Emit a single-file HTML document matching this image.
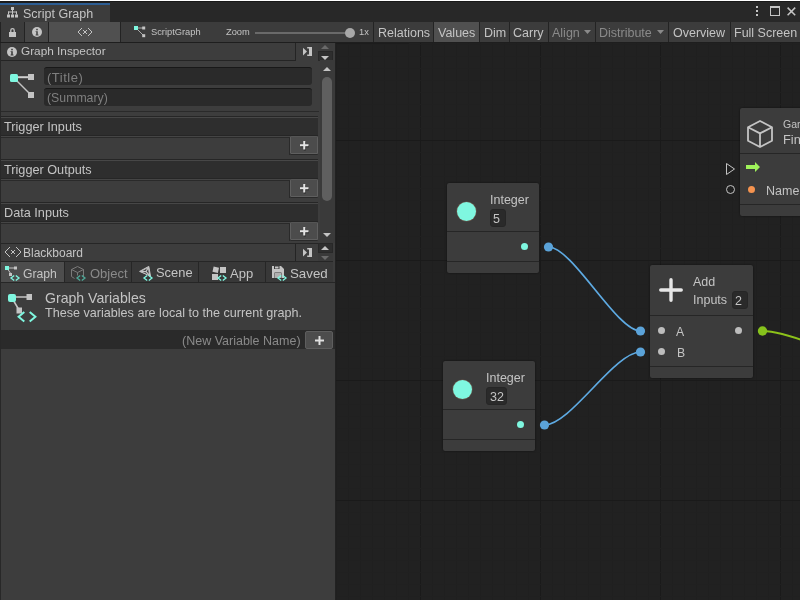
<!DOCTYPE html>
<html><head><meta charset="utf-8">
<style>
*{margin:0;padding:0;box-sizing:border-box}
html,body{width:800px;height:600px;overflow:hidden;background:#202020;font-family:"Liberation Sans",sans-serif;color:#c4c4c4;-webkit-font-smoothing:antialiased}
.a{position:absolute}
.t{position:absolute;white-space:nowrap;line-height:1;will-change:transform}
svg{position:absolute;overflow:visible}
</style></head><body>
<div class="a" style="left:336px;top:43px;width:464px;height:557px;background:#212121;"></div>
<svg style="left:336px;top:43px" width="464" height="557"><line x1="0.5" y1="0" x2="0.5" y2="557" stroke="#1f1f1f" stroke-width="1"/><line x1="12.5" y1="0" x2="12.5" y2="557" stroke="#1f1f1f" stroke-width="1"/><line x1="24.5" y1="0" x2="24.5" y2="557" stroke="#1f1f1f" stroke-width="1"/><line x1="36.5" y1="0" x2="36.5" y2="557" stroke="#1f1f1f" stroke-width="1"/><line x1="48.5" y1="0" x2="48.5" y2="557" stroke="#1f1f1f" stroke-width="1"/><line x1="60.5" y1="0" x2="60.5" y2="557" stroke="#1f1f1f" stroke-width="1"/><line x1="72.5" y1="0" x2="72.5" y2="557" stroke="#1f1f1f" stroke-width="1"/><line x1="84.5" y1="0" x2="84.5" y2="557" stroke="#1a1a1a" stroke-width="1"/><line x1="96.5" y1="0" x2="96.5" y2="557" stroke="#1f1f1f" stroke-width="1"/><line x1="108.5" y1="0" x2="108.5" y2="557" stroke="#1f1f1f" stroke-width="1"/><line x1="120.5" y1="0" x2="120.5" y2="557" stroke="#1f1f1f" stroke-width="1"/><line x1="132.5" y1="0" x2="132.5" y2="557" stroke="#1f1f1f" stroke-width="1"/><line x1="144.5" y1="0" x2="144.5" y2="557" stroke="#1f1f1f" stroke-width="1"/><line x1="156.5" y1="0" x2="156.5" y2="557" stroke="#1f1f1f" stroke-width="1"/><line x1="168.5" y1="0" x2="168.5" y2="557" stroke="#1f1f1f" stroke-width="1"/><line x1="180.5" y1="0" x2="180.5" y2="557" stroke="#1f1f1f" stroke-width="1"/><line x1="192.5" y1="0" x2="192.5" y2="557" stroke="#1f1f1f" stroke-width="1"/><line x1="204.5" y1="0" x2="204.5" y2="557" stroke="#1a1a1a" stroke-width="1"/><line x1="216.5" y1="0" x2="216.5" y2="557" stroke="#1f1f1f" stroke-width="1"/><line x1="228.5" y1="0" x2="228.5" y2="557" stroke="#1f1f1f" stroke-width="1"/><line x1="240.5" y1="0" x2="240.5" y2="557" stroke="#1f1f1f" stroke-width="1"/><line x1="252.5" y1="0" x2="252.5" y2="557" stroke="#1f1f1f" stroke-width="1"/><line x1="264.5" y1="0" x2="264.5" y2="557" stroke="#1f1f1f" stroke-width="1"/><line x1="276.5" y1="0" x2="276.5" y2="557" stroke="#1f1f1f" stroke-width="1"/><line x1="288.5" y1="0" x2="288.5" y2="557" stroke="#1f1f1f" stroke-width="1"/><line x1="300.5" y1="0" x2="300.5" y2="557" stroke="#1f1f1f" stroke-width="1"/><line x1="312.5" y1="0" x2="312.5" y2="557" stroke="#1f1f1f" stroke-width="1"/><line x1="324.5" y1="0" x2="324.5" y2="557" stroke="#1a1a1a" stroke-width="1"/><line x1="336.5" y1="0" x2="336.5" y2="557" stroke="#1f1f1f" stroke-width="1"/><line x1="348.5" y1="0" x2="348.5" y2="557" stroke="#1f1f1f" stroke-width="1"/><line x1="360.5" y1="0" x2="360.5" y2="557" stroke="#1f1f1f" stroke-width="1"/><line x1="372.5" y1="0" x2="372.5" y2="557" stroke="#1f1f1f" stroke-width="1"/><line x1="384.5" y1="0" x2="384.5" y2="557" stroke="#1f1f1f" stroke-width="1"/><line x1="396.5" y1="0" x2="396.5" y2="557" stroke="#1f1f1f" stroke-width="1"/><line x1="408.5" y1="0" x2="408.5" y2="557" stroke="#1f1f1f" stroke-width="1"/><line x1="420.5" y1="0" x2="420.5" y2="557" stroke="#1f1f1f" stroke-width="1"/><line x1="432.5" y1="0" x2="432.5" y2="557" stroke="#1f1f1f" stroke-width="1"/><line x1="444.5" y1="0" x2="444.5" y2="557" stroke="#1a1a1a" stroke-width="1"/><line x1="456.5" y1="0" x2="456.5" y2="557" stroke="#1f1f1f" stroke-width="1"/><line x1="0" y1="1.5" x2="464" y2="1.5" stroke="#202020" stroke-width="1"/><line x1="0" y1="13.5" x2="464" y2="13.5" stroke="#202020" stroke-width="1"/><line x1="0" y1="25.5" x2="464" y2="25.5" stroke="#202020" stroke-width="1"/><line x1="0" y1="37.5" x2="464" y2="37.5" stroke="#202020" stroke-width="1"/><line x1="0" y1="49.5" x2="464" y2="49.5" stroke="#202020" stroke-width="1"/><line x1="0" y1="61.5" x2="464" y2="61.5" stroke="#202020" stroke-width="1"/><line x1="0" y1="73.5" x2="464" y2="73.5" stroke="#202020" stroke-width="1"/><line x1="0" y1="85.5" x2="464" y2="85.5" stroke="#202020" stroke-width="1"/><line x1="0" y1="97.5" x2="464" y2="97.5" stroke="#1a1a1a" stroke-width="1"/><line x1="0" y1="109.5" x2="464" y2="109.5" stroke="#202020" stroke-width="1"/><line x1="0" y1="121.5" x2="464" y2="121.5" stroke="#202020" stroke-width="1"/><line x1="0" y1="133.5" x2="464" y2="133.5" stroke="#202020" stroke-width="1"/><line x1="0" y1="145.5" x2="464" y2="145.5" stroke="#202020" stroke-width="1"/><line x1="0" y1="157.5" x2="464" y2="157.5" stroke="#202020" stroke-width="1"/><line x1="0" y1="169.5" x2="464" y2="169.5" stroke="#202020" stroke-width="1"/><line x1="0" y1="181.5" x2="464" y2="181.5" stroke="#202020" stroke-width="1"/><line x1="0" y1="193.5" x2="464" y2="193.5" stroke="#202020" stroke-width="1"/><line x1="0" y1="205.5" x2="464" y2="205.5" stroke="#202020" stroke-width="1"/><line x1="0" y1="217.5" x2="464" y2="217.5" stroke="#1a1a1a" stroke-width="1"/><line x1="0" y1="229.5" x2="464" y2="229.5" stroke="#202020" stroke-width="1"/><line x1="0" y1="241.5" x2="464" y2="241.5" stroke="#202020" stroke-width="1"/><line x1="0" y1="253.5" x2="464" y2="253.5" stroke="#202020" stroke-width="1"/><line x1="0" y1="265.5" x2="464" y2="265.5" stroke="#202020" stroke-width="1"/><line x1="0" y1="277.5" x2="464" y2="277.5" stroke="#202020" stroke-width="1"/><line x1="0" y1="289.5" x2="464" y2="289.5" stroke="#202020" stroke-width="1"/><line x1="0" y1="301.5" x2="464" y2="301.5" stroke="#202020" stroke-width="1"/><line x1="0" y1="313.5" x2="464" y2="313.5" stroke="#202020" stroke-width="1"/><line x1="0" y1="325.5" x2="464" y2="325.5" stroke="#202020" stroke-width="1"/><line x1="0" y1="337.5" x2="464" y2="337.5" stroke="#1a1a1a" stroke-width="1"/><line x1="0" y1="349.5" x2="464" y2="349.5" stroke="#202020" stroke-width="1"/><line x1="0" y1="361.5" x2="464" y2="361.5" stroke="#202020" stroke-width="1"/><line x1="0" y1="373.5" x2="464" y2="373.5" stroke="#202020" stroke-width="1"/><line x1="0" y1="385.5" x2="464" y2="385.5" stroke="#202020" stroke-width="1"/><line x1="0" y1="397.5" x2="464" y2="397.5" stroke="#202020" stroke-width="1"/><line x1="0" y1="409.5" x2="464" y2="409.5" stroke="#202020" stroke-width="1"/><line x1="0" y1="421.5" x2="464" y2="421.5" stroke="#202020" stroke-width="1"/><line x1="0" y1="433.5" x2="464" y2="433.5" stroke="#202020" stroke-width="1"/><line x1="0" y1="445.5" x2="464" y2="445.5" stroke="#202020" stroke-width="1"/><line x1="0" y1="457.5" x2="464" y2="457.5" stroke="#1a1a1a" stroke-width="1"/><line x1="0" y1="469.5" x2="464" y2="469.5" stroke="#202020" stroke-width="1"/><line x1="0" y1="481.5" x2="464" y2="481.5" stroke="#202020" stroke-width="1"/><line x1="0" y1="493.5" x2="464" y2="493.5" stroke="#202020" stroke-width="1"/><line x1="0" y1="505.5" x2="464" y2="505.5" stroke="#202020" stroke-width="1"/><line x1="0" y1="517.5" x2="464" y2="517.5" stroke="#202020" stroke-width="1"/><line x1="0" y1="529.5" x2="464" y2="529.5" stroke="#202020" stroke-width="1"/><line x1="0" y1="541.5" x2="464" y2="541.5" stroke="#202020" stroke-width="1"/><line x1="0" y1="553.5" x2="464" y2="553.5" stroke="#202020" stroke-width="1"/></svg>
<div class="a" style="left:0px;top:0px;width:800px;height:22px;background:#282828;"></div>
<div class="a" style="left:0px;top:0px;width:800px;height:1px;background:#ffffff;"></div>
<div class="a" style="left:0px;top:1px;width:800px;height:1px;background:#191919;"></div>
<div class="a" style="left:0px;top:2px;width:110px;height:1px;background:#1e1e1e;"></div>
<div class="a" style="left:0px;top:3px;width:110px;height:19px;background:#3c3c3c;"></div>
<div class="a" style="left:0px;top:3px;width:110px;height:2px;background:#2c5d93;"></div>
<svg style="left:7px;top:7px" width="11" height="11" viewBox="0 0 11 11"><g fill="#c4c4c4"><rect x="4" y="0" width="3" height="3"/><rect x="5" y="3" width="1" height="2"/><rect x="1" y="4.5" width="9" height="1"/><rect x="1" y="4.5" width="1" height="3"/><rect x="9" y="4.5" width="1" height="3"/><rect x="5" y="4.5" width="1" height="3"/><rect x="0" y="7.5" width="3" height="3"/><rect x="4" y="7.5" width="3" height="3"/><rect x="8" y="7.5" width="3" height="3"/></g></svg>
<div class="t" style="left:22.5px;top:7.61px;font-size:12.5px;color:#c4c4c4;">Script Graph</div>
<div class="a" style="left:756px;top:6px;width:2px;height:2px;background:#c4c4c4;"></div>
<div class="a" style="left:756px;top:10px;width:2px;height:2px;background:#c4c4c4;"></div>
<div class="a" style="left:756px;top:14px;width:2px;height:2px;background:#c4c4c4;"></div>
<div class="a" style="left:770px;top:6px;width:10px;height:10px;border:1px solid #c4c4c4;border-top-width:2.5px"></div>
<svg style="left:786.7px;top:6.6px" width="9" height="9" viewBox="0 0 9 9"><path d="M0.6 0.6L8.2 8.2M8.2 0.6L0.6 8.2" stroke="#c4c4c4" stroke-width="1.5"/></svg>
<div class="a" style="left:0px;top:22px;width:800px;height:20px;background:#3c3c3c;"></div>
<div class="a" style="left:0px;top:42px;width:800px;height:1px;background:#1e1e1e;"></div>
<div class="a" style="left:336px;top:43px;width:73px;height:1px;background:#1c1c1c;"></div>
<div class="a" style="left:0px;top:22px;width:1px;height:20px;background:#232323;"></div>
<div class="a" style="left:24px;top:22px;width:1px;height:20px;background:#232323;"></div>
<div class="a" style="left:25px;top:22px;width:23px;height:20px;background:#464646;"></div>
<div class="a" style="left:48px;top:22px;width:1px;height:20px;background:#232323;"></div>
<div class="a" style="left:49px;top:22px;width:71px;height:20px;background:#505050;"></div>
<div class="a" style="left:120px;top:22px;width:1px;height:20px;background:#232323;"></div>
<svg style="left:9px;top:28px" width="8" height="9" viewBox="0 0 8 9"><path d="M1.8 4.2V2.3a1.7 1.7 0 0 1 3.4 0V4.2" fill="none" stroke="#c4c4c4" stroke-width="1.3"/><rect x="0" y="4" width="7" height="5" fill="#c4c4c4"/></svg>
<svg style="left:32px;top:27px" width="10" height="10" viewBox="0 0 10 10"><circle cx="5" cy="5" r="5" fill="#c4c4c4"/><rect x="4.2" y="1.8" width="1.6" height="1.5" fill="#464646"/><path d="M3.6 4.2H5.8V7.6H6.5V8.4H3.6V7.6H4.2V5H3.6Z" fill="#464646"/></svg>
<svg style="left:78px;top:28px" width="20" height="12" shape-rendering="crispEdges"><g fill="#c4c4c4"><rect x="3" y="0" width="1" height="1"/><rect x="2" y="1" width="1" height="1"/><rect x="1" y="2" width="1" height="1"/><rect x="0" y="3" width="1" height="1"/><rect x="0" y="4" width="1" height="1"/><rect x="1" y="5" width="1" height="1"/><rect x="2" y="6" width="1" height="1"/><rect x="3" y="7" width="1" height="1"/><rect x="10" y="0" width="1" height="1"/><rect x="11" y="1" width="1" height="1"/><rect x="12" y="2" width="1" height="1"/><rect x="13" y="3" width="1" height="1"/><rect x="13" y="4" width="1" height="1"/><rect x="12" y="5" width="1" height="1"/><rect x="11" y="6" width="1" height="1"/><rect x="10" y="7" width="1" height="1"/><rect x="5" y="2" width="1" height="1"/><rect x="8" y="2" width="1" height="1"/><rect x="5" y="5" width="1" height="1"/><rect x="8" y="5" width="1" height="1"/><rect x="6" y="3" width="1" height="1"/><rect x="7" y="3" width="1" height="1"/><rect x="6" y="4" width="1" height="1"/><rect x="7" y="4" width="1" height="1"/></g></svg>
<svg style="left:134px;top:26px" width="12" height="12" viewBox="0 0 12 12"><path d="M3 2H9M3 3L9.5 9.5" stroke="#b8b8b8" stroke-width="0.9"/><rect x="0" y="0" width="4" height="4" fill="#7ff7e0"/><rect x="8.2" y="0.5" width="3" height="3" fill="#c4c4c4"/><rect x="8.2" y="8.2" width="3" height="3" fill="#c4c4c4"/></svg>
<div class="t" style="left:151px;top:27.62px;font-size:9.3px;color:#c4c4c4;">ScriptGraph</div>
<div class="t" style="left:226px;top:27.62px;font-size:9.3px;color:#c4c4c4;">Zoom</div>
<div class="a" style="left:255px;top:32px;width:95px;height:2px;background:#6a6a6a;"></div>
<div class="a" style="left:345px;top:28px;width:10px;height:10px;border-radius:50%;background:#a8a8a8"></div>
<div class="t" style="left:359px;top:27.62px;font-size:9.3px;color:#c4c4c4;">1x</div>
<div class="a" style="left:373px;top:22px;width:1px;height:20px;background:#232323;"></div>
<div class="a" style="left:374px;top:22px;width:59px;height:20px;background:#3c3c3c;"></div>
<div class="t" style="left:377.6px;top:26.71px;font-size:12.5px;color:#c4c4c4;">Relations</div>
<div class="a" style="left:433px;top:22px;width:1px;height:20px;background:#232323;"></div>
<div class="a" style="left:434px;top:22px;width:45px;height:20px;background:#505050;"></div>
<div class="t" style="left:437.6px;top:26.71px;font-size:12.5px;color:#c4c4c4;">Values</div>
<div class="a" style="left:479px;top:22px;width:1px;height:20px;background:#232323;"></div>
<div class="a" style="left:480px;top:22px;width:29px;height:20px;background:#3c3c3c;"></div>
<div class="t" style="left:484px;top:26.71px;font-size:12.5px;color:#c4c4c4;">Dim</div>
<div class="a" style="left:509px;top:22px;width:1px;height:20px;background:#232323;"></div>
<div class="a" style="left:510px;top:22px;width:38px;height:20px;background:#3c3c3c;"></div>
<div class="t" style="left:513px;top:26.71px;font-size:12.5px;color:#c4c4c4;">Carry</div>
<div class="a" style="left:548px;top:22px;width:1px;height:20px;background:#232323;"></div>
<div class="a" style="left:549px;top:22px;width:46px;height:20px;background:#3c3c3c;"></div>
<div class="t" style="left:551.8px;top:26.71px;font-size:12.5px;color:#8a8a8a;">Align</div>
<div class="a" style="left:595px;top:22px;width:1px;height:20px;background:#232323;"></div>
<div class="a" style="left:596px;top:22px;width:72px;height:20px;background:#3c3c3c;"></div>
<div class="t" style="left:599px;top:26.71px;font-size:12.5px;color:#8a8a8a;">Distribute</div>
<div class="a" style="left:668px;top:22px;width:1px;height:20px;background:#232323;"></div>
<div class="a" style="left:669px;top:22px;width:61px;height:20px;background:#3c3c3c;"></div>
<div class="t" style="left:673px;top:26.71px;font-size:12.5px;color:#c4c4c4;">Overview</div>
<div class="a" style="left:730px;top:22px;width:1px;height:20px;background:#232323;"></div>
<div class="a" style="left:731px;top:22px;width:69px;height:20px;background:#3c3c3c;"></div>
<div class="t" style="left:734px;top:26.71px;font-size:12.5px;color:#c4c4c4;">Full Screen</div>
<svg style="left:583.7px;top:30px" width="7" height="4"><path d="M0 0H7L3.5 4Z" fill="#8a8a8a"/></svg>
<svg style="left:656.8px;top:30px" width="7" height="4"><path d="M0 0H7L3.5 4Z" fill="#8a8a8a"/></svg>
<div class="a" style="left:0px;top:43px;width:335px;height:557px;background:#3d3d3d;"></div>
<div class="a" style="left:0px;top:43px;width:1px;height:557px;background:#282828;"></div>
<div class="a" style="left:335px;top:43px;width:1px;height:557px;background:#222222;"></div>
<div class="a" style="left:1px;top:43px;width:294px;height:17px;background:#3d3d3d;"></div>
<div class="a" style="left:295px;top:43px;width:1px;height:18px;background:#242424;"></div>
<div class="a" style="left:1px;top:60px;width:295px;height:1px;background:#242424;"></div>
<svg style="left:7px;top:46.5px" width="10" height="10" viewBox="0 0 10 10"><circle cx="5" cy="5" r="5" fill="#c4c4c4"/><rect x="4.2" y="1.8" width="1.6" height="1.5" fill="#3d3d3d"/><path d="M3.6 4.2H5.8V7.6H6.5V8.4H3.6V7.6H4.2V5H3.6Z" fill="#3d3d3d"/></svg>
<div class="t" style="left:21.3px;top:46.11px;font-size:11.8px;color:#c4c4c4;">Graph Inspector</div>
<svg style="left:303px;top:47px" width="10" height="9" viewBox="0 0 10 9"><path d="M0 0.7L4 4.6L0 8.5Z" fill="#c4c4c4"/><path d="M4.2 0H9V9H4.2V7.5H6V1.5H4.2Z" fill="#c4c4c4"/></svg>
<div class="a" style="left:318px;top:43px;width:15px;height:8px;background:#3c3c3c;"></div>
<div class="a" style="left:318px;top:51px;width:15px;height:10px;background:#2e2e2e;border:1px solid #282828"></div>
<svg style="left:321px;top:45px" width="8" height="4"><path d="M0 4H8L4 0Z" fill="#6a6a6a"/></svg>
<svg style="left:321px;top:56px" width="8" height="4"><path d="M0 0H8L4 4Z" fill="#c4c4c4"/></svg>
<svg style="left:10px;top:74px" width="24" height="24" viewBox="0 0 24 24"><path d="M4 3.2H21" stroke="#cfcfcf" stroke-width="2"/><path d="M4 4L21 21" stroke="#c4c4c4" stroke-width="1.5"/><rect x="0" y="0" width="8" height="8" rx="1.5" fill="#7ff7e0"/><rect x="18" y="0" width="6" height="6" fill="#c4c4c4"/><rect x="18" y="18" width="6" height="6" fill="#c4c4c4"/></svg>
<div class="a" style="left:44px;top:67px;width:268px;height:18px;background:#2a2a2a;border-radius:3px;border-top:1px solid #181818"></div>
<div class="a" style="left:44px;top:88px;width:268px;height:18px;background:#2a2a2a;border-radius:3px;border-top:1px solid #181818"></div>
<div class="t" style="left:46.8px;top:70.69px;font-size:13px;color:#7f7f7f;letter-spacing:0.5px">(Title)</div>
<div class="t" style="left:46.8px;top:91.98px;font-size:12.3px;color:#7f7f7f;">(Summary)</div>
<div class="a" style="left:320px;top:60px;width:15px;height:183px;background:#3a3a3a;"></div>
<svg style="left:323px;top:67px" width="8" height="4"><path d="M0 4H8L4 0Z" fill="#c4c4c4"/></svg>
<div class="a" style="left:322px;top:77px;width:10px;height:124px;background:#5f5f5f;border-radius:5px"></div>
<svg style="left:323px;top:233.3px" width="8" height="4"><path d="M0 0H8L4 4Z" fill="#c4c4c4"/></svg>
<div class="a" style="left:1px;top:111px;width:318px;height:1px;background:#2a2a2a;"></div>
<div class="a" style="left:1px;top:116px;width:317px;height:1px;background:#262626;"></div>
<div class="a" style="left:1px;top:117px;width:317px;height:1px;background:#474747;"></div>
<div class="a" style="left:1px;top:118px;width:317px;height:17px;background:#2e2e2e;"></div>
<div class="a" style="left:1px;top:135px;width:317px;height:1px;background:#262626;"></div>
<div class="a" style="left:1px;top:136px;width:289px;height:1px;background:#454545;"></div>
<div class="a" style="left:1px;top:137px;width:289px;height:1px;background:#2a2a2a;"></div>
<div class="a" style="left:289px;top:137px;width:1px;height:18px;background:#2a2a2a;"></div>
<div class="a" style="left:1px;top:138px;width:288px;height:21px;background:#3d3d3d;"></div>
<div class="t" style="left:3.8px;top:121.14px;font-size:12.7px;color:#c4c4c4;">Trigger Inputs</div>
<div class="a" style="left:290px;top:136px;width:28px;height:18px;background:#4c4c4c;border:1px solid #5f5f5f;border-top-color:#555;border-radius:1.5px;box-shadow:0 1px 0 #2a2a2a"></div>
<svg style="left:299.75px;top:140.75px" width="9" height="9"><path d="M0 4.25H8.5M4.25 0V8.5" stroke="#000" stroke-opacity="0.5" stroke-width="2" transform="translate(0.5,1)"/><path d="M0 4.25H8.5M4.25 0V8.5" stroke="#e4e4e4" stroke-width="2"/></svg>
<div class="a" style="left:1px;top:159px;width:317px;height:1px;background:#262626;"></div>
<div class="a" style="left:1px;top:160px;width:317px;height:1px;background:#474747;"></div>
<div class="a" style="left:1px;top:161px;width:317px;height:17px;background:#2e2e2e;"></div>
<div class="a" style="left:1px;top:178px;width:317px;height:1px;background:#262626;"></div>
<div class="a" style="left:1px;top:179px;width:289px;height:1px;background:#454545;"></div>
<div class="a" style="left:1px;top:180px;width:289px;height:1px;background:#2a2a2a;"></div>
<div class="a" style="left:289px;top:180px;width:1px;height:18px;background:#2a2a2a;"></div>
<div class="a" style="left:1px;top:181px;width:288px;height:21px;background:#3d3d3d;"></div>
<div class="t" style="left:3.8px;top:164.14px;font-size:12.7px;color:#c4c4c4;">Trigger Outputs</div>
<div class="a" style="left:290px;top:179px;width:28px;height:18px;background:#4c4c4c;border:1px solid #5f5f5f;border-top-color:#555;border-radius:1.5px;box-shadow:0 1px 0 #2a2a2a"></div>
<svg style="left:299.75px;top:183.75px" width="9" height="9"><path d="M0 4.25H8.5M4.25 0V8.5" stroke="#000" stroke-opacity="0.5" stroke-width="2" transform="translate(0.5,1)"/><path d="M0 4.25H8.5M4.25 0V8.5" stroke="#e4e4e4" stroke-width="2"/></svg>
<div class="a" style="left:1px;top:202px;width:317px;height:1px;background:#262626;"></div>
<div class="a" style="left:1px;top:203px;width:317px;height:1px;background:#474747;"></div>
<div class="a" style="left:1px;top:204px;width:317px;height:17px;background:#2e2e2e;"></div>
<div class="a" style="left:1px;top:221px;width:317px;height:1px;background:#262626;"></div>
<div class="a" style="left:1px;top:222px;width:289px;height:1px;background:#454545;"></div>
<div class="a" style="left:1px;top:223px;width:289px;height:1px;background:#2a2a2a;"></div>
<div class="a" style="left:289px;top:223px;width:1px;height:18px;background:#2a2a2a;"></div>
<div class="a" style="left:1px;top:224px;width:288px;height:21px;background:#3d3d3d;"></div>
<div class="t" style="left:3.8px;top:207.14px;font-size:12.7px;color:#c4c4c4;">Data Inputs</div>
<div class="a" style="left:290px;top:222px;width:28px;height:18px;background:#4c4c4c;border:1px solid #5f5f5f;border-top-color:#555;border-radius:1.5px;box-shadow:0 1px 0 #2a2a2a"></div>
<svg style="left:299.75px;top:226.75px" width="9" height="9"><path d="M0 4.25H8.5M4.25 0V8.5" stroke="#000" stroke-opacity="0.5" stroke-width="2" transform="translate(0.5,1)"/><path d="M0 4.25H8.5M4.25 0V8.5" stroke="#e4e4e4" stroke-width="2"/></svg>
<div class="a" style="left:1px;top:243px;width:318px;height:1px;background:#262626;"></div>
<div class="a" style="left:1px;top:244px;width:294px;height:17px;background:#3d3d3d;"></div>
<div class="a" style="left:295px;top:244px;width:1px;height:17px;background:#242424;"></div>
<svg style="left:5px;top:247px" width="20" height="12" shape-rendering="crispEdges"><g fill="#c4c4c4"><rect x="4" y="0" width="1" height="1"/><rect x="3" y="1" width="1" height="1"/><rect x="2" y="2" width="1" height="1"/><rect x="1" y="3" width="1" height="1"/><rect x="0" y="4" width="1" height="1"/><rect x="0" y="5" width="1" height="1"/><rect x="1" y="6" width="1" height="1"/><rect x="2" y="7" width="1" height="1"/><rect x="3" y="8" width="1" height="1"/><rect x="4" y="9" width="1" height="1"/><rect x="11" y="0" width="1" height="1"/><rect x="12" y="1" width="1" height="1"/><rect x="13" y="2" width="1" height="1"/><rect x="14" y="3" width="1" height="1"/><rect x="15" y="4" width="1" height="1"/><rect x="15" y="5" width="1" height="1"/><rect x="14" y="6" width="1" height="1"/><rect x="13" y="7" width="1" height="1"/><rect x="12" y="8" width="1" height="1"/><rect x="11" y="9" width="1" height="1"/><rect x="6" y="3" width="1" height="1"/><rect x="9" y="3" width="1" height="1"/><rect x="6" y="6" width="1" height="1"/><rect x="9" y="6" width="1" height="1"/><rect x="7" y="4" width="1" height="1"/><rect x="8" y="4" width="1" height="1"/><rect x="7" y="5" width="1" height="1"/><rect x="8" y="5" width="1" height="1"/></g></svg>
<div class="t" style="left:22.8px;top:247.04px;font-size:12px;color:#c4c4c4;">Blackboard</div>
<svg style="left:303px;top:248px" width="10" height="9" viewBox="0 0 10 9"><path d="M0 0.7L4 4.6L0 8.5Z" fill="#c4c4c4"/><path d="M4.2 0H9V9H4.2V7.5H6V1.5H4.2Z" fill="#c4c4c4"/></svg>
<div class="a" style="left:318px;top:243px;width:15px;height:10px;background:#2e2e2e;border:1px solid #282828"></div>
<div class="a" style="left:318px;top:253px;width:15px;height:8px;background:#3a3a3a;"></div>
<svg style="left:321px;top:246px" width="8" height="4"><path d="M0 4H8L4 0Z" fill="#c4c4c4"/></svg>
<svg style="left:321px;top:256px" width="8" height="4"><path d="M0 0H8L4 4Z" fill="#6a6a6a"/></svg>
<div class="a" style="left:1px;top:261px;width:332px;height:21px;background:#262626;"></div>
<div class="a" style="left:1px;top:262px;width:63px;height:20px;background:#4d4d4d;"></div>
<div class="t" style="left:23px;top:267.97px;font-size:12.2px;color:#c4c4c4;">Graph</div>
<div class="a" style="left:65px;top:262px;width:66px;height:20px;background:#383838;"></div>
<div class="t" style="left:90.3px;top:267.29px;font-size:13px;color:#8a8a8a;">Object</div>
<div class="a" style="left:132px;top:262px;width:66px;height:20px;background:#383838;"></div>
<div class="t" style="left:156.3px;top:267.37px;font-size:12.9px;color:#c4c4c4;">Scene</div>
<div class="a" style="left:199px;top:262px;width:66px;height:20px;background:#383838;"></div>
<div class="t" style="left:229.8px;top:267.29px;font-size:13px;color:#c4c4c4;">App</div>
<div class="a" style="left:266px;top:262px;width:67px;height:20px;background:#383838;"></div>
<div class="t" style="left:290.3px;top:267.03px;font-size:13.3px;color:#c4c4c4;">Saved</div>
<svg style="left:5px;top:266px" width="13" height="10" viewBox="0 0 13 10"><path d="M2 2H11M2 2L6 8" stroke="#c4c4c4" stroke-width="1"/><rect x="0" y="0" width="4" height="4" fill="#7ff7e0"/><rect x="9" y="0.5" width="3" height="3" fill="#c4c4c4"/><rect x="4" y="7" width="3" height="3" fill="#c4c4c4"/></svg>
<svg style="left:9.6px;top:274.6px" width="10" height="6" viewBox="0 0 10 6"><path d="M4.2 0.4L1 3L4.2 5.6M5.8 0.4L9 3L5.8 5.6" fill="none" stroke="#7ff7e0" stroke-width="1.35"/></svg>
<svg style="left:71px;top:266px" width="13" height="13" viewBox="0 0 13 13"><path d="M6.5 0.5L12.5 3.5V10.5M0.5 10.5V3.5L6.5 0.5M0.5 3.5L6.5 6.5L12.5 3.5M6.5 6.5V9.5M0.5 10.5L3.5 12.5" fill="none" stroke="#7a7a7a" stroke-width="1"/></svg>
<svg style="left:75.6px;top:274.8px" width="10" height="6" viewBox="0 0 10 6"><path d="M4.2 0.4L1 3L4.2 5.6M5.8 0.4L9 3L5.8 5.6" fill="none" stroke="#4fa898" stroke-width="1.35"/></svg>
<svg style="left:138.5px;top:265.5px" width="12" height="11" viewBox="0 0 12 11"><path d="M0.6 5.4L9.8 0.4L11.5 10.2Z" fill="#c4c4c4" stroke="#c4c4c4" stroke-width="1" stroke-linejoin="round"/><path d="M2.6 5.4L8.9 2.1L10.1 9Z" fill="#383838"/><path d="M7 5.6L2.6 5.4M7 5.6L8.9 2.1M7 5.6L10.1 9" stroke="#c4c4c4" stroke-width="1.2"/></svg>
<svg style="left:142.6px;top:274.8px" width="10" height="6" viewBox="0 0 10 6"><path d="M4.2 0.4L1 3L4.2 5.6M5.8 0.4L9 3L5.8 5.6" fill="none" stroke="#7ff7e0" stroke-width="1.35"/></svg>
<svg style="left:212px;top:266px" width="15" height="14" viewBox="0 0 15 14"><rect x="1" y="1" width="5.5" height="5.5" transform="rotate(12 3.75 3.75)" fill="#c4c4c4"/><rect x="8" y="1" width="6" height="6" fill="#c4c4c4"/><rect x="0" y="8" width="6" height="6" fill="#c4c4c4"/></svg>
<svg style="left:216.6px;top:274.8px" width="10" height="6" viewBox="0 0 10 6"><path d="M4.2 0.4L1 3L4.2 5.6M5.8 0.4L9 3L5.8 5.6" fill="none" stroke="#7ff7e0" stroke-width="1.35"/></svg>
<svg style="left:272px;top:266px" width="12" height="12" viewBox="0 0 12 12"><path d="M0 0H9L12 3V12H0Z" fill="#c4c4c4"/><rect x="2" y="0" width="5.5" height="3" fill="#383838"/><rect x="3" y="0.5" width="3.5" height="2" fill="#c4c4c4"/><rect x="2.5" y="6.5" width="7" height="5.5" fill="#383838"/><rect x="3" y="7" width="6" height="5" fill="#b0b0b0"/></svg>
<svg style="left:276.6px;top:274.8px" width="10" height="6" viewBox="0 0 10 6"><path d="M4.2 0.4L1 3L4.2 5.6M5.8 0.4L9 3L5.8 5.6" fill="none" stroke="#7ff7e0" stroke-width="1.35"/></svg>
<div class="a" style="left:1px;top:282px;width:334px;height:1px;background:#262626;"></div>
<svg style="left:8px;top:294px" width="28" height="28" viewBox="0 0 28 28"><path d="M4 3H21M4 4L11 16" stroke="#c4c4c4" stroke-width="1.5"/><rect x="0" y="0" width="8" height="8" rx="2" fill="#7ff7e0"/><rect x="18.5" y="0" width="5.5" height="6" fill="#c4c4c4"/><rect x="8.5" y="13.5" width="5.5" height="6" fill="#c4c4c4"/><path d="M16.3 18L10.6 22.75L16.3 27.5M21.7 18L27.4 22.75L21.7 27.5" fill="none" stroke="#7ff7e0" stroke-width="2"/></svg>
<div class="t" style="left:44.9px;top:291.26px;font-size:14.1px;color:#c4c4c4;">Graph Variables</div>
<div class="t" style="left:44.8px;top:307.13px;font-size:12.6px;color:#c4c4c4;">These variables are local to the current graph.</div>
<div class="a" style="left:1px;top:330px;width:334px;height:19px;background:#2a2a2a;"></div>
<div class="a" style="left:305px;top:331px;width:28px;height:18px;background:#4d4d4d;border:1px solid #5e5e5e;border-radius:2px"></div>
<svg style="left:315px;top:336px" width="9" height="9"><path d="M0 4.5H9M4.5 0V9" stroke="#e0e0e0" stroke-width="2"/></svg>
<div class="t" style="left:182.3px;top:335.11px;font-size:12.5px;color:#8a8a8a;">(New Variable Name)</div>
<div class="a" style="left:447px;top:183px;width:92px;height:90px;background:#3c3c3c;border-radius:2px;box-shadow:0 0 2px rgba(0,0,0,0.6)"></div>
<div class="a" style="left:447px;top:231px;width:92px;height:1px;background:#262626;"></div>
<div class="a" style="left:447px;top:261px;width:92px;height:1px;background:#262626;"></div>
<div class="a" style="left:456.5px;top:201.6px;width:19px;height:19px;box-shadow:0 0 0 0.6px #6b5a4e;border-radius:50%;background:#7ff7e0"></div>
<div class="t" style="left:490.3px;top:193.61px;font-size:12.5px;color:#c4c4c4;">Integer</div>
<div class="a" style="left:490px;top:209px;width:15.5px;height:17.5px;background:#2a2a2a;border-radius:3px;border:1px solid #262626"></div>
<div class="t" style="left:493.2px;top:213.01px;font-size:12.5px;color:#c4c4c4;">5</div>
<div class="a" style="left:521px;top:243px;width:7px;height:7px;border-radius:50%;background:#7ff7e0"></div>
<div class="a" style="left:443px;top:361px;width:92px;height:90px;background:#3c3c3c;border-radius:2px;box-shadow:0 0 2px rgba(0,0,0,0.6)"></div>
<div class="a" style="left:443px;top:409px;width:92px;height:1px;background:#262626;"></div>
<div class="a" style="left:443px;top:439px;width:92px;height:1px;background:#262626;"></div>
<div class="a" style="left:452.5px;top:379.5px;width:19px;height:19px;box-shadow:0 0 0 0.6px #6b5a4e;border-radius:50%;background:#7ff7e0"></div>
<div class="t" style="left:486.3px;top:371.61px;font-size:12.5px;color:#c4c4c4;">Integer</div>
<div class="a" style="left:486.3px;top:387px;width:21px;height:17.5px;background:#2a2a2a;border-radius:3px;border:1px solid #262626"></div>
<div class="t" style="left:489.6px;top:391.01px;font-size:12.5px;color:#c4c4c4;">32</div>
<div class="a" style="left:517px;top:421px;width:7px;height:7px;border-radius:50%;background:#7ff7e0"></div>
<div class="a" style="left:650px;top:265px;width:103px;height:113px;background:#3c3c3c;border-radius:2px;box-shadow:0 0 2px rgba(0,0,0,0.6)"></div>
<div class="a" style="left:650px;top:315px;width:103px;height:1px;background:#262626;"></div>
<div class="a" style="left:650px;top:366px;width:103px;height:1px;background:#262626;"></div>
<svg style="left:659px;top:278px" width="24" height="24"><path d="M1.75 12H22.25M12 1.75V22.25" stroke="#e6e6e6" stroke-width="3.4" stroke-linecap="round"/></svg>
<div class="t" style="left:693.2px;top:276.41px;font-size:12.5px;color:#c4c4c4;">Add</div>
<div class="t" style="left:693.2px;top:293.61px;font-size:12.5px;color:#c4c4c4;">Inputs</div>
<div class="a" style="left:732px;top:291px;width:15.5px;height:17.5px;background:#2a2a2a;border-radius:3px;border:1px solid #262626"></div>
<div class="t" style="left:735.4px;top:294.91px;font-size:12.5px;color:#c4c4c4;">2</div>
<div class="a" style="left:658px;top:327px;width:7px;height:7px;border-radius:50%;background:#bdbdbd"></div>
<div class="a" style="left:658px;top:348px;width:7px;height:7px;border-radius:50%;background:#bdbdbd"></div>
<div class="a" style="left:735px;top:327px;width:7px;height:7px;border-radius:50%;background:#bdbdbd"></div>
<div class="t" style="left:676.2px;top:325.67px;font-size:12.2px;color:#c4c4c4;">A</div>
<div class="t" style="left:676.6px;top:346.67px;font-size:12.2px;color:#c4c4c4;">B</div>
<div class="a" style="left:740px;top:108px;width:80px;height:108px;background:#3c3c3c;border-radius:2px;box-shadow:0 0 2px rgba(0,0,0,0.6)"></div>
<div class="a" style="left:740px;top:153px;width:80px;height:1px;background:#262626;"></div>
<div class="a" style="left:740px;top:204px;width:80px;height:1px;background:#262626;"></div>
<svg style="left:747px;top:119.5px" width="26" height="28" viewBox="0 0 26 28"><path d="M13 1L25 7.2V20.8L13 27L1 20.8V7.2Z M1 7.2L13 13.4L25 7.2 M13 13.4V27" fill="none" stroke="#c4c4c4" stroke-width="1.8" stroke-linejoin="round"/></svg>
<div class="t" style="left:783.4px;top:118.61px;font-size:10.5px;color:#c4c4c4;">GameObject</div>
<div class="t" style="left:783.4px;top:134.16px;font-size:12.8px;color:#c4c4c4;">Find</div>
<svg style="left:726px;top:163px" width="9" height="12"><path d="M0.5 0.5L8.5 6L0.5 11.5Z" fill="none" stroke="#c4c4c4" stroke-width="1"/></svg>
<svg style="left:746px;top:162px" width="14" height="10"><path d="M0 3H9V0L14 5L9 10V7H0Z" fill="#9ff25a"/></svg>
<svg style="left:726px;top:185px" width="10" height="10"><circle cx="4.5" cy="4.5" r="4" fill="none" stroke="#c4c4c4" stroke-width="1"/></svg>
<div class="a" style="left:748px;top:186.3px;width:7.2px;height:7.2px;border-radius:50%;background:#f5934f"></div>
<div class="t" style="left:765.5px;top:185.21px;font-size:12.5px;color:#c4c4c4;">Name</div>
<svg style="left:0;top:0" width="800" height="600">
<path d="M548.5 247 C572.5 247 616.5 331 640.5 331" fill="none" stroke="#5eaae2" stroke-width="1.7"/>
<path d="M544.5 425 C570.5 425 614.5 352 640.5 352" fill="none" stroke="#5eaae2" stroke-width="1.7"/>
<path d="M762.5 331 C775 331 790 335.5 810 343" fill="none" stroke="#8cc21a" stroke-width="2.1"/>
<circle cx="548.5" cy="247" r="4.6" fill="#5ba3d9"/>
<circle cx="544.5" cy="425" r="4.6" fill="#5ba3d9"/>
<circle cx="640.5" cy="331" r="4.6" fill="#5ba3d9"/>
<circle cx="640.5" cy="352" r="4.6" fill="#5ba3d9"/>
<circle cx="762.5" cy="331" r="4.7" fill="#86c21c"/>
</svg>
</body></html>
